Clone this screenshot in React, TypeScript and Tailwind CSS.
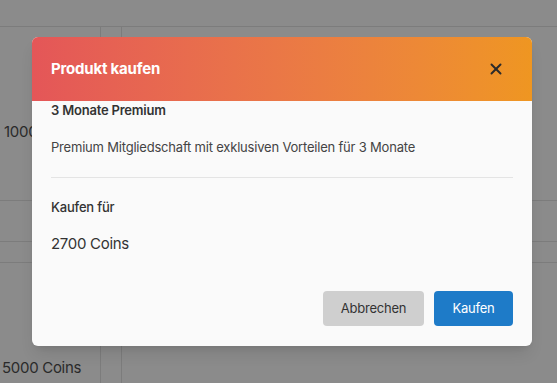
import React from 'react';
import { X } from 'lucide-react';

const font = { fontFamily: 'Inter, "Noto Sans", sans-serif' };

function Backdrop() {
  return (
    <div className="h-[383px] w-full overflow-hidden bg-[#8b8b8b] pt-[26px] text-[#2a2a2a] tracking-[-0.3px]">
      <div className="grid grid-cols-[101px_21px_1fr] grid-rows-[174px_41px_21px_1fr] h-full border-t border-[#7c7c7c]">
        <div className="border-r border-b border-[#7c7c7c] pt-[94px] pl-[4px] text-[15px] whitespace-nowrap">1000 Coins</div>
        <div className="border-r border-b border-[#7c7c7c]" />
        <div className="border-b border-[#7c7c7c]" />
        <div className="border-r border-b border-[#7c7c7c]" />
        <div className="border-r border-b border-[#7c7c7c]" />
        <div className="border-b border-[#7c7c7c]" />
        <div className="border-r border-b border-[#7c7c7c]" />
        <div className="border-r border-b border-[#7c7c7c]" />
        <div className="border-b border-[#7c7c7c]" />
        <div className="border-r border-[#7c7c7c] pt-[94px] pl-[2px] text-[15px] whitespace-nowrap">5000 Coins</div>
        <div className="border-r border-[#7c7c7c]" />
        <div />
      </div>
    </div>
  );
}

export default function App() {
  return (
    <div className="relative h-[383px] w-[557px] overflow-hidden" style={font}>
      <Backdrop />

      <div className="absolute left-[32px] top-[37px] w-[500px] overflow-hidden rounded-md bg-[#fafafa] shadow-lg">
        <div className="flex h-[64px] items-center justify-between bg-gradient-to-r from-[#e45658] to-[#ef9621] pl-[19px] pr-[27px]">
          <h2 className="text-[15px] font-bold tracking-[-0.2px] text-white">Produkt kaufen</h2>
          <X size={18} strokeWidth={2.6} className="text-[#2b2b2b]" />
        </div>

        <div className="px-[19px] pb-[20px] tracking-[-0.2px]">
          <p className="text-[13px] leading-[18px] font-semibold text-[#333]">3 Monate Premium</p>
          <p className="mt-[18px] text-[13px] leading-[20px] text-[#444]">
            Premium Mitgliedschaft mit exklusiven Vorteilen für 3 Monate
          </p>
          <div className="mt-[20px] border-t border-[#e4e4e4]" />
          <p className="mt-[19px] text-[13px] leading-[20px] font-medium text-[#333]">Kaufen für</p>
          <p className="mt-[16px] text-[15px] leading-[22px] text-[#333] tracking-[-0.3px]">2700 Coins</p>

          <div className="mt-[36px] flex justify-end gap-[10px]">
            <button className="h-[35px] w-[101px] rounded bg-[#cfcfcf] text-[13px] text-[#333]">Abbrechen</button>
            <button className="h-[35px] w-[79px] rounded bg-[#1e7bc8] text-[13px] text-white">Kaufen</button>
          </div>
        </div>
      </div>
    </div>
  );
}
